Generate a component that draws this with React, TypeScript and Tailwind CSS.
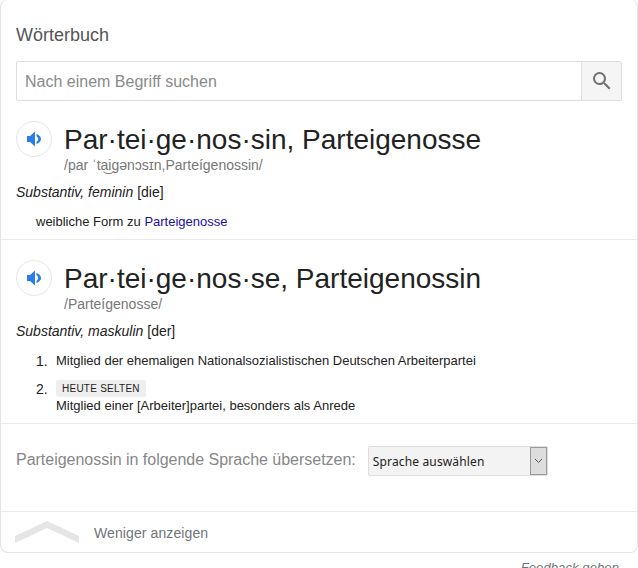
const sans = "font-['Liberation_Sans',Arial,sans-serif]";

function SpeakerButton() {
  return (
    <div className="flex h-9 w-9 shrink-0 items-center justify-center rounded-full border border-[#e6e6e6] bg-white">
      <svg width="15" height="16" viewBox="0 0 15 16" fill="#2b7de9">
        <path d="M0 5v6h3l5 4.500V.5L3 5H0z" />
        <path d="M9.500 3v2.200c1 .6 1.700 1.600 1.700 2.800s-.7 2.200-1.700 2.800V13c2.400-.7 4.500-2.700 4.500-5s-2.100-4.300-4.500-5z" />
      </svg>
    </div>
  );
}

function Headword({ word, phonetic }: { word: string; phonetic: string }) {
  return (
    <div className="flex gap-3">
      <SpeakerButton />
      <div className="min-w-0">
        <div className="h-[35px] whitespace-nowrap text-[28px] leading-[38px] text-[#222]">{word}</div>
        <div className="h-[18px] text-sm leading-[18px] text-[#777]">{phonetic}</div>
      </div>
    </div>
  );
}

function Grammar({ kind, article }: { kind: string; article: string }) {
  return (
    <div className="mt-[9px] h-[18px] text-sm leading-[18px] text-[#222]">
      <i>{kind}</i> {article}
    </div>
  );
}

export default function App() {
  return (
    <div className={`h-[568px] w-[638px] overflow-hidden bg-white ${sans}`}>
      <div className="-mt-px h-[554px] w-[638px] rounded-lg border border-[#e3e3e3] border-t-[#f0f0f0] bg-white">
        <div className="px-[15px] pt-[25px]">
          <h2 className="h-[21px] text-lg leading-5 text-[#555]">Wörterbuch</h2>
          <div className="mt-[15px] flex h-10 w-[606px] rounded-[2px] border border-[#ddd]">
            <input
              className="min-w-0 flex-1 bg-transparent px-2 pt-[2px] text-base text-[#333] outline-none placeholder:text-[#8a8a8a]"
              placeholder="Nach einem Begriff suchen"
            />
            <div className="flex w-10 items-center justify-center border-l border-[#ddd] bg-[#f5f5f5]">
              <svg width="24" height="24" viewBox="0 0 24 24" fill="#6f6f6f">
                <path d="M15.5 14h-.79l-.28-.27A6.471 6.471 0 0 0 16 9.5 6.5 6.5 0 1 0 9.5 16c1.61 0 3.09-.59 4.23-1.57l.27.28v.79l5 4.99L20.49 19l-4.99-5zm-6 0C7.01 14 5 11.99 5 9.5S7.01 5 9.5 5 14 7.01 14 9.5 11.99 14 9.5 14z" />
              </svg>
            </div>
          </div>

          <div className="mt-5">
            <Headword word="Par·tei·ge·nos·sin, Parteigenosse" phonetic="/par ˈta͜igənɔsɪn,Parteígenossin/" />
            <Grammar kind="Substantiv, feminin" article="[die]" />
            <p className="mt-3 h-[18px] pl-5 text-[13px] leading-[18px] text-[#222]">
              weibliche Form zu <a className="text-[#1a0dab]">Parteigenosse</a>
            </p>
          </div>
        </div>

        <div className="mt-[8px] border-t border-[#e9e9e9] px-[15px] pt-5">
          <Headword word="Par·tei·ge·nos·se, Parteigenossin" phonetic="/Parteígenosse/" />
          <Grammar kind="Substantiv, maskulin" article="[der]" />
          <ol className="mt-[12px] pl-5 text-[13px] text-[#222]">
            <li className="flex h-[18px] items-center">
              <span className="w-[20px] text-sm">1.</span>
              <span>Mitglied der ehemaligen Nationalsozialistischen Deutschen Arbeiterpartei</span>
            </li>
            <li className="mt-[10px] flex">
              <span className="w-[20px] text-sm leading-[18px]">2.</span>
              <div>
                <span className="block h-[17px] w-fit rounded-[2px] bg-[#eee] px-[6px] text-[10px] leading-[18px] tracking-[0.25px] text-[#222]">
                  HEUTE SELTEN
                </span>
                <div className="h-[18px] leading-[18px]">Mitglied einer [Arbeiter]partei, besonders als Anrede</div>
              </div>
            </li>
          </ol>
        </div>

        <div className="mt-2 flex h-[88px] items-start gap-[12px] border-t border-[#e9e9e9] px-[15px] pt-[22px]">
          <span className="text-base leading-[28px] tracking-[-0.02px] text-[#878787]">Parteigenossin in folgende Sprache übersetzen:</span>
          <div className="flex h-[30px] w-[180px] rounded-[2px] border border-[#ddd] bg-[#f3f3f3]">
            <span className="flex-1 pl-1 font-['Noto_Sans',sans-serif] text-xs leading-[29px] tracking-[0.15px] text-[#222]">Sprache auswählen</span>
            <span className="flex w-[17px] items-center justify-center border border-[#9a9a9a] bg-[#ddd]">
              <svg width="9" height="6" viewBox="0 0 9 6" fill="none" stroke="#555" strokeWidth="1">
                <path d="M1 1l3.5 3.5L8 1" />
              </svg>
            </span>
          </div>
        </div>

        <div className="flex h-[41px] items-center border-t border-[#e9e9e9] pl-[14px]">
          <svg width="64" height="22" viewBox="0 0 64 22" fill="#e5e5e5">
            <path d="M32 0L64 15v7L32 7 0 22v-7z" />
          </svg>
          <span className="ml-[15px] pt-[2px] text-sm tracking-[0.1px] text-[#70757a]">Weniger anzeigen</span>
        </div>
      </div>
      <div className="mt-[7px] pr-[19px] text-right text-[13px] tracking-[0.1px] italic leading-4 text-[#70757a]">Feedback geben</div>
    </div>
  );
}
